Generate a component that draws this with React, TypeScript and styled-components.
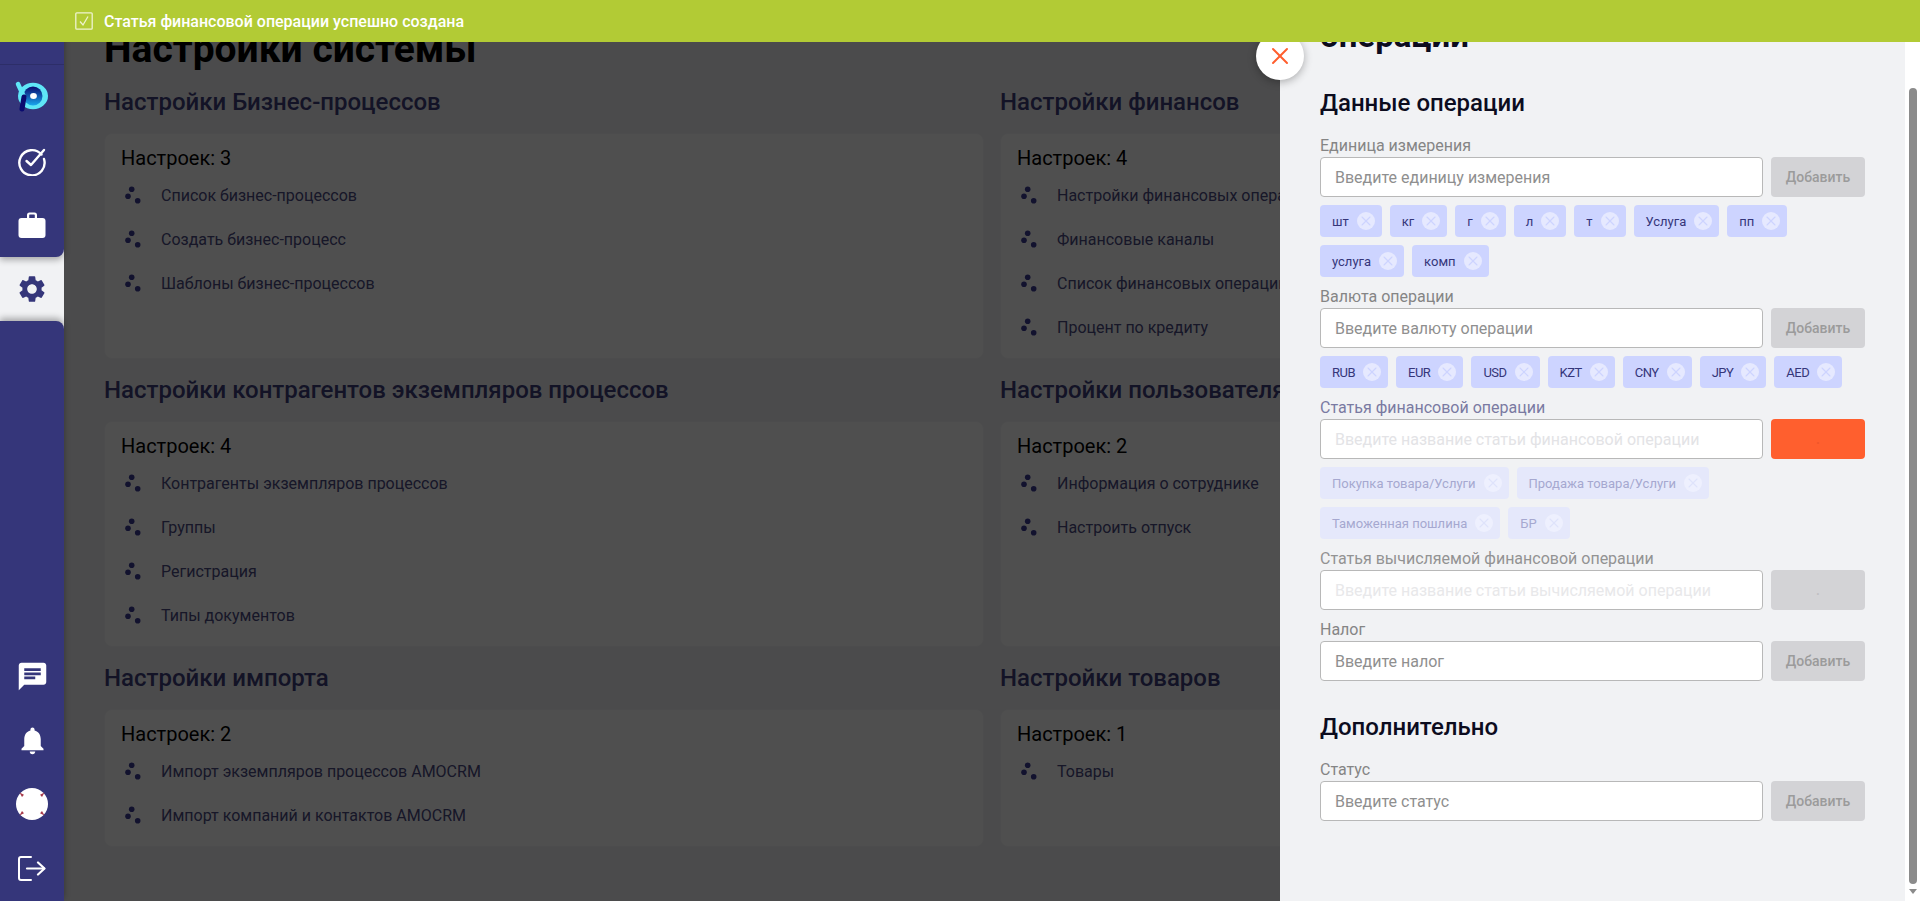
import { createGlobalStyle, styled } from 'styled-components'
import { X } from 'lucide-react'
import { MdChat, MdNotifications, MdSettings } from 'react-icons/md'

const GlobalStyle = createGlobalStyle`
  html, body {
    margin: 0;
    height: 100%;
    overflow: hidden;
    background: #f1f2f4;
    font-family: Roboto, "Noto Sans", sans-serif;
  }
  * { box-sizing: border-box; }
`

const Page = styled.div`
  position: relative;
  display: flex;
  width: 1920px;
  height: 901px;
  overflow: hidden;
`

const Sidebar = styled.aside`
  position: relative;
  z-index: 3;
  flex: 0 0 64px;
  display: flex;
  flex-direction: column;
  background: #f1f2f4;
`

const SideTop = styled.div`
  height: 257px;
  background: #35367a;
  border-bottom-right-radius: 8px;
  box-shadow: 0 3px 6px rgba(0, 0, 0, 0.3);
  position: relative;
  z-index: 1;
`

const SideHead = styled.div`
  height: 65px;
  border-bottom: 1px solid #2d2e68;
`

const SideBottom = styled.div`
  flex: 1;
  display: flex;
  flex-direction: column;
  justify-content: flex-end;
  padding-bottom: 1px;
  background: #35367a;
  border-top-right-radius: 8px;
  box-shadow: 0 -3px 6px rgba(0, 0, 0, 0.3);
  position: relative;
  z-index: 1;
`

const SideItem = styled.div<{ $active?: boolean }>`
  height: 64px;
  display: flex;
  align-items: center;
  justify-content: center;
  color: ${(p) => (p.$active ? '#35367a' : '#ffffff')};
`

const Avatar = styled.div`
  width: 32px;
  height: 32px;
`

const Main = styled.main`
  flex: 1;
  min-width: 0;
  padding: 27px 40px;
  background: #f1f2f4;
`

const PageTitle = styled.h1`
  margin: 0 0 15px;
  font-size: 39px;
  line-height: 44px;
  font-weight: 700;
  color: #000;
`

const Sections = styled.div`
  display: grid;
  grid-template-columns: 880px 880px;
  column-gap: 16px;
  row-gap: 15px;
`

const Section = styled.section`
  display: flex;
  flex-direction: column;
`

const SectionTitle = styled.h2`
  margin: 0 0 15px;
  font-size: 24px;
  line-height: 32px;
  font-weight: 500;
  color: #3e3e7c;
  white-space: nowrap;
`

const Card = styled.div`
  flex: 1;
  padding: 9px 18px;
  background: #ffffff;
  border: 1px solid #f6f6f8;
  border-radius: 8px;
`

const CardCount = styled.div`
  margin-left: -2px;
  font-size: 20px;
  line-height: 30px;
  color: #000;
`

const CardItem = styled.div`
  display: flex;
  align-items: center;
  height: 44px;
  gap: 18px;
  padding-left: 2px;
  font-size: 16px;
  color: #4a4a82;
  white-space: nowrap;
`

const Overlay = styled.div`
  position: absolute;
  z-index: 1;
  inset: 0;
  background: rgba(0, 0, 0, 0.69);
`

const Banner = styled.div`
  position: absolute;
  z-index: 6;
  top: 0;
  left: 0;
  right: 0;
  height: 42px;
  display: flex;
  align-items: center;
  gap: 11px;
  padding: 0 0 0 75px;
  background: #b2cb35;
  color: #ffffff;
  font-size: 16px;
  font-weight: 500;
`

const Drawer = styled.div`
  position: absolute;
  z-index: 2;
  top: 0;
  right: 0;
  bottom: 0;
  width: 640px;
  display: flex;
  background: #f1f2f4;
`

const DrawerBody = styled.div`
  flex: 1;
  min-width: 0;
  padding: 16px 40px 0;
  overflow: hidden;
`

const ScrollTrack = styled.div`
  flex: 0 0 15px;
  display: flex;
  flex-direction: column;
  align-items: center;
  background: #ffffff;
  padding-top: 88px;
`

const ScrollThumb = styled.div`
  width: 8px;
  height: 796px;
  border-radius: 4px;
  background: #8b8b8b;
`

const ScrollArrow = styled.div`
  margin-top: 5px;
  width: 0;
  height: 0;
  border-left: 4px solid transparent;
  border-right: 4px solid transparent;
  border-top: 5px solid #8b8b8b;
`

const CloseButton = styled.button`
  position: absolute;
  z-index: 4;
  top: 32px;
  left: 1256px;
  width: 48px;
  height: 48px;
  display: flex;
  align-items: center;
  justify-content: center;
  padding: 0;
  border: none;
  border-radius: 50%;
  background: #ffffff;
  box-shadow: 0 2px 8px rgba(0, 0, 0, 0.3);
  color: #ff5f2e;
`

const DrawerTitle = styled.h1`
  margin: 0 0 31px;
  font-size: 33px;
  line-height: 40px;
  font-weight: 700;
  color: #0c0c1e;
`

const GroupTitle = styled.h2<{ $spaced?: boolean }>`
  margin: ${(p) => (p.$spaced ? '30px' : '0')} 0 16px;
  font-size: 24px;
  line-height: 32px;
  font-weight: 500;
  color: #0c0c1e;
`

const Field = styled.div`
  margin-bottom: 9px;
`

const FieldLabel = styled.div<{ $color: string }>`
  font-size: 16px;
  line-height: 22px;
  color: ${(p) => p.$color};
`

const InputRow = styled.div`
  display: flex;
  gap: 8px;
`

const TextInput = styled.input<{ $hint: string }>`
  flex: 1;
  min-width: 0;
  height: 40px;
  padding: 0 14px;
  border: 1px solid #b8b8b8;
  border-radius: 4px;
  background: #ffffff;
  font-family: inherit;
  font-size: 16px;
  &::placeholder {
    color: ${(p) => p.$hint};
    opacity: 1;
  }
`

const AddButton = styled.button<{ $bg: string; $fg: string }>`
  flex: 0 0 94px;
  height: 40px;
  padding: 0;
  border: none;
  border-radius: 4px;
  background: ${(p) => p.$bg};
  color: ${(p) => p.$fg};
  font-family: inherit;
  font-size: 14px;
  font-weight: 500;
`

const Chips = styled.div`
  display: flex;
  flex-wrap: wrap;
  gap: 8px;
  margin-top: 8px;
`

const Chip = styled.div<{ $faded?: boolean; $tight?: boolean }>`
  display: flex;
  align-items: center;
  height: 32px;
  gap: 8px;
  padding: 0 7px 0 12px;
  border-radius: 4px;
  background: ${(p) => (p.$faded ? '#e5e8fb' : '#cdd4ff')};
  color: ${(p) => (p.$faded ? '#a6a8d0' : '#35367a')};
  font-size: 13px;
  letter-spacing: ${(p) => (p.$tight ? '-0.5px' : '0')};
  white-space: nowrap;
`

const ChipClose = styled.span<{ $faded?: boolean }>`
  display: flex;
  align-items: center;
  justify-content: center;
  width: 18px;
  height: 18px;
  border-radius: 50%;
  background: ${(p) => (p.$faded ? '#eef0fe' : '#e6e9ff')};
  color: ${(p) => (p.$faded ? '#dfe3fb' : '#cdd4ff')};
`

const Logo = () => (
  <svg width="34" height="32" viewBox="0 0 34 32" fill="none">
    <defs>
      <linearGradient id="eye" x1="0" y1="0" x2="0" y2="1">
        <stop offset="0" stopColor="#0a0a6e" />
        <stop offset="1" stopColor="#1aa8ee" />
      </linearGradient>
    </defs>
    <circle cx="18" cy="15" r="15" fill="#5fe6f7" transform="matrix(1 0 0 .88 0 1.8)" />
    <circle cx="18" cy="15" r="9.5" fill="url(#eye)" />
    <ellipse cx="18.5" cy="15" rx="3.4" ry="3" fill="#ffffff" />
    <path d="M3 3 L9 16" stroke="#5fe6f7" strokeWidth="4.5" strokeLinecap="round" />
    <path d="M9 16 L7 28" stroke="#0a0a6e" strokeWidth="5" strokeLinecap="round" />
  </svg>
)

const CheckCircle = () => (
  <svg width="30" height="30" viewBox="0 0 30 30" fill="none" stroke="#ffffff" strokeWidth="2.4" strokeLinecap="round" strokeLinejoin="round">
    <path d="M24.5 8.5 A12.6 12.6 0 1 0 27 13" />
    <path d="M9.5 15 L14 19 L27 4" />
  </svg>
)

const Briefcase = () => (
  <svg width="28" height="26" viewBox="0 0 28 26" fill="#ffffff">
    <path d="M9 6 V3 a2.5 2.5 0 0 1 2.5-2.5 h5 A2.5 2.5 0 0 1 19 3 V6 H16.8 V3.2 a.6.6 0 0 0-.6-.6 h-4.4 a.6.6 0 0 0-.6.6 V6 Z" />
    <rect x="0.5" y="6" width="27" height="20" rx="3" />
  </svg>
)

const Logout = () => (
  <svg width="28" height="25" viewBox="0 0 28 25" fill="none" stroke="#ffffff" strokeWidth="2" strokeLinecap="round" strokeLinejoin="round">
    <path d="M13 1 H3 a2 2 0 0 0-2 2 V22 a2 2 0 0 0 2 2 H13" />
    <path d="M9 12.5 H26" strokeWidth="2.2" />
    <path d="M20 6.5 L26.5 12.5 L20 18.5" strokeWidth="2.2" />
  </svg>
)

const AvatarMark = () => (
  <Avatar>
    <svg width="32" height="32" viewBox="0 0 32 32">
      <circle cx="16" cy="16" r="16" fill="#ffffff" />
      <path d="M3.5 4.5 L8 6.8 L6 9 Z M28.5 4.5 L24 6.8 L26 9 Z M3.5 27.5 L8 25.2 L6 23 Z M28.5 27.5 L24 25.2 L26 23 Z" fill="#a83a4a" />
    </svg>
  </Avatar>
)

const Dots = () => (
  <svg width="18" height="18" viewBox="0 0 18 18" fill="#3c3c96">
    <circle cx="6.7" cy="3.3" r="2.8" />
    <circle cx="3" cy="10.3" r="2.8" />
    <circle cx="12.7" cy="14.7" r="2.8" />
  </svg>
)

const BannerCheck = () => (
  <svg width="18" height="18" viewBox="0 0 18 18" fill="none" stroke="#eef3cf" strokeWidth="1.3">
    <rect x="0.8" y="0.8" width="16.4" height="16.4" rx="1" />
    <path d="M5 9.5 L8 13 L13 4.5" />
  </svg>
)

const sections = [
  { title: 'Настройки Бизнес-процессов', items: ['Список бизнес-процессов', 'Создать бизнес-процесс', 'Шаблоны бизнес-процессов'] },
  { title: 'Настройки финансов', items: ['Настройки финансовых операций', 'Финансовые каналы', 'Список финансовых операций', 'Процент по кредиту'] },
  { title: 'Настройки контрагентов экземпляров процессов', items: ['Контрагенты экземпляров процессов', 'Группы', 'Регистрация', 'Типы документов'] },
  { title: 'Настройки пользователя', items: ['Информация о сотруднике', 'Настроить отпуск'] },
  { title: 'Настройки импорта', items: ['Импорт экземпляров процессов AMOCRM', 'Импорт компаний и контактов AMOCRM'] },
  { title: 'Настройки товаров', items: ['Товары'] },
]

type FieldData = {
  label: string
  labelColor: string
  hint: string
  placeholder: string
  chips: string[]
  faded?: boolean
  tight?: boolean
  buttonBg?: string
  buttonFg?: string
  buttonText?: string
}

const fields: FieldData[] = [
  {
    label: 'Единица измерения',
    labelColor: '#858585',
    hint: '#8f8f8f',
    placeholder: 'Введите единицу измерения',
    chips: ['шт', 'кг', 'г', 'л', 'т', 'Услуга', 'пп', 'услуга', 'комп'],
  },
  {
    label: 'Валюта операции',
    labelColor: '#858585',
    hint: '#8f8f8f',
    placeholder: 'Введите валюту операции',
    chips: ['RUB', 'EUR', 'USD', 'KZT', 'CNY', 'JPY', 'AED'],
    tight: true,
  },
  {
    label: 'Статья финансовой операции',
    labelColor: '#7a7aa2',
    hint: '#e3e3e6',
    placeholder: 'Введите название статьи финансовой операции',
    chips: ['Покупка товара/Услуги', 'Продажа товара/Услуги', 'Таможенная пошлина', 'БР'],
    faded: true,
    buttonBg: '#ff5f2e',
    buttonFg: '#f0562a',
    buttonText: '.',
  },
  {
    label: 'Статья вычисляемой финансовой операции',
    labelColor: '#939393',
    hint: '#e8e8ea',
    placeholder: 'Введите название статьи вычисляемой операции',
    chips: [],
    buttonFg: '#c0c0c3',
    buttonText: '.',
  },
  {
    label: 'Налог',
    labelColor: '#858585',
    hint: '#8f8f8f',
    placeholder: 'Введите налог',
    chips: [],
  },
]

const FormField = ({ field }: { field: FieldData }) => (
  <Field>
    <FieldLabel $color={field.labelColor}>{field.label}</FieldLabel>
    <InputRow>
      <TextInput $hint={field.hint} placeholder={field.placeholder} readOnly />
      <AddButton $bg={field.buttonBg ?? '#d3d3d6'} $fg={field.buttonFg ?? '#9b9b9b'}>
        {field.buttonText ?? 'Добавить'}
      </AddButton>
    </InputRow>
    {field.chips.length > 0 && (
      <Chips>
        {field.chips.map((chip) => (
          <Chip key={chip} $faded={field.faded} $tight={field.tight}>
            {chip}
            <ChipClose $faded={field.faded}>
              <X size={16} strokeWidth={1.6} />
            </ChipClose>
          </Chip>
        ))}
      </Chips>
    )}
  </Field>
)

const App = () => {
  return (
    <Page>
      <GlobalStyle />
      <Sidebar>
        <SideTop>
          <SideHead />
          <SideItem>
            <Logo />
          </SideItem>
          <SideItem>
            <CheckCircle />
          </SideItem>
          <SideItem>
            <Briefcase />
          </SideItem>
        </SideTop>
        <SideItem $active>
          <MdSettings size={32} />
        </SideItem>
        <SideBottom>
          <SideItem>
            <MdChat size={33} />
          </SideItem>
          <SideItem>
            <MdNotifications size={33} />
          </SideItem>
          <SideItem>
            <AvatarMark />
          </SideItem>
          <SideItem>
            <Logout />
          </SideItem>
        </SideBottom>
      </Sidebar>

      <Main>
        <PageTitle>Настройки системы</PageTitle>
        <Sections>
          {sections.map((section) => (
            <Section key={section.title}>
              <SectionTitle>{section.title}</SectionTitle>
              <Card>
                <CardCount>Настроек: {section.items.length}</CardCount>
                {section.items.map((item) => (
                  <CardItem key={item}>
                    <Dots />
                    {item}
                  </CardItem>
                ))}
              </Card>
            </Section>
          ))}
        </Sections>
      </Main>

      <Overlay />

      <Drawer>
        <DrawerBody>
          <DrawerTitle>операции</DrawerTitle>
          <GroupTitle>Данные операции</GroupTitle>
          {fields.map((field) => (
            <FormField key={field.label} field={field} />
          ))}
          <GroupTitle $spaced>Дополнительно</GroupTitle>
          <FormField
            field={{
              label: 'Статус',
              labelColor: '#858585',
              hint: '#8f8f8f',
              placeholder: 'Введите статус',
              chips: [],
            }}
          />
        </DrawerBody>
        <ScrollTrack>
          <ScrollThumb />
          <ScrollArrow />
        </ScrollTrack>
      </Drawer>

      <CloseButton>
        <X size={28} strokeWidth={1.7} />
      </CloseButton>

      <Banner>
        <BannerCheck />
        Статья финансовой операции успешно создана
      </Banner>
    </Page>
  )
}

export default App
